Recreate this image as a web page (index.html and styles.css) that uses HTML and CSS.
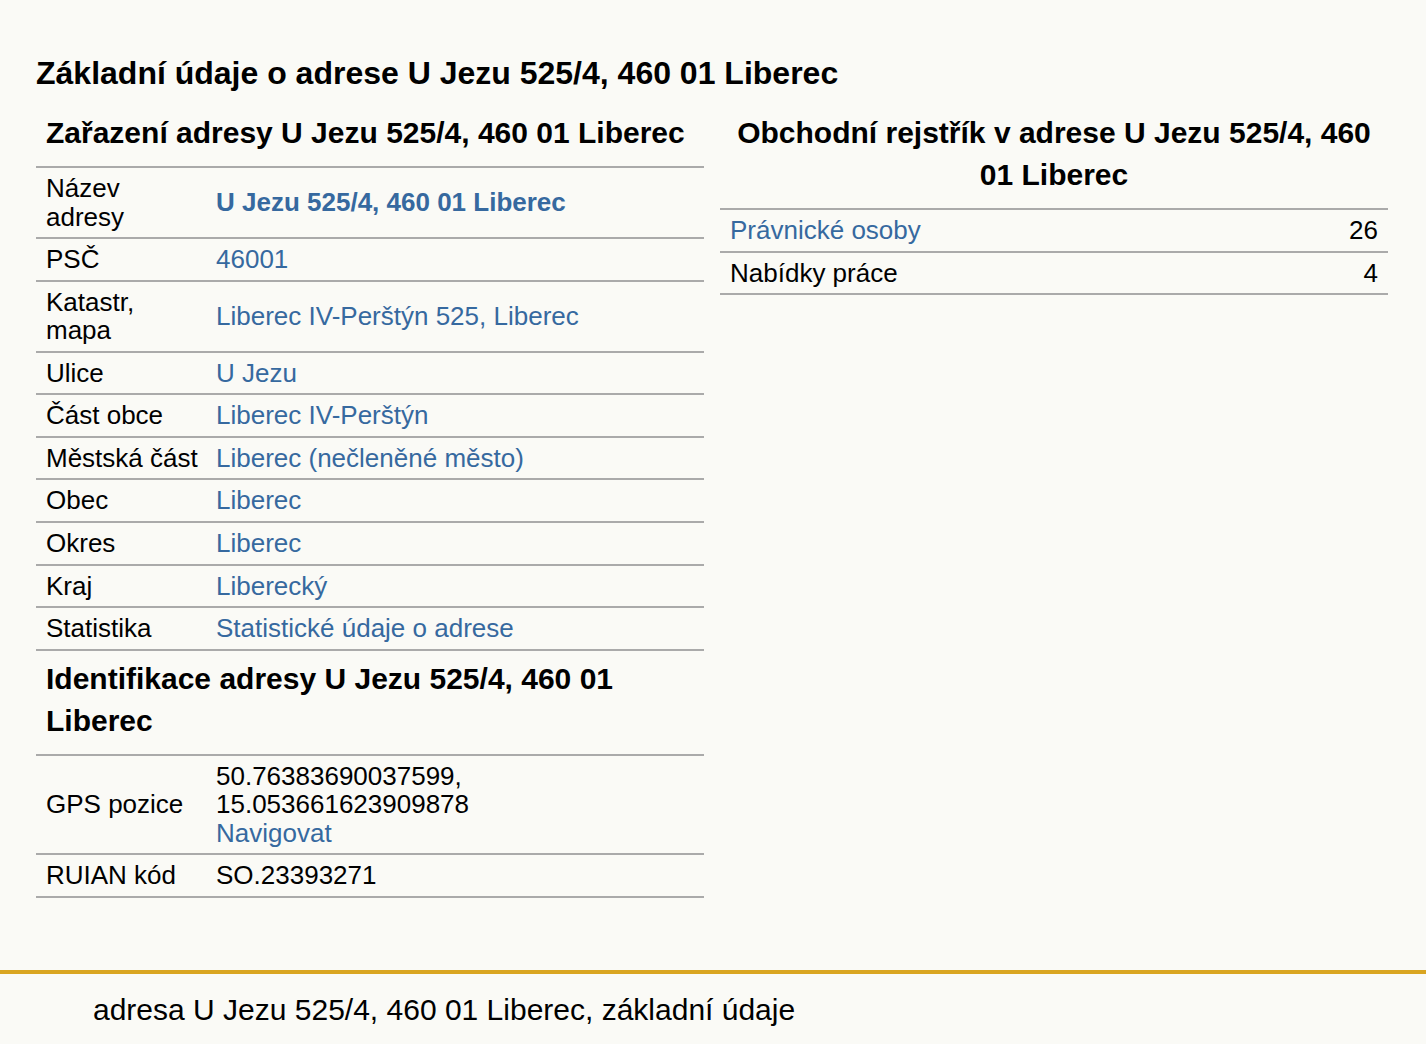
FILE: index.html
```html
<!DOCTYPE html>
<html lang="cs">
<head>
<meta charset="utf-8">
<title>adresa U Jezu 525/4, 460 01 Liberec, základní údaje</title>
<link rel="stylesheet" href="styles.css">
</head>
<body>
<main class="page">
  <h1 class="page-title">Základní údaje o adrese U Jezu 525/4, 460 01 Liberec</h1>
  <div class="columns">
    <section class="col">
      <h2 class="sec-title">Zařazení adresy U Jezu 525/4, 460 01 Liberec</h2>
      <table class="info">
        <colgroup><col class="c-label"><col></colgroup>
        <tbody>
          <tr><td>Název adresy</td><td><a class="strong" href="#">U Jezu 525/4, 460 01 Liberec</a></td></tr>
          <tr><td>PSČ</td><td><a href="#">46001</a></td></tr>
          <tr><td>Katastr, mapa</td><td><a href="#">Liberec IV-Perštýn 525, Liberec</a></td></tr>
          <tr><td>Ulice</td><td><a href="#">U Jezu</a></td></tr>
          <tr><td>Část obce</td><td><a href="#">Liberec IV-Perštýn</a></td></tr>
          <tr><td class="nowrap">Městská část</td><td><a href="#">Liberec (nečleněné město)</a></td></tr>
          <tr><td>Obec</td><td><a href="#">Liberec</a></td></tr>
          <tr><td>Okres</td><td><a href="#">Liberec</a></td></tr>
          <tr><td>Kraj</td><td><a href="#">Liberecký</a></td></tr>
          <tr><td>Statistika</td><td><a href="#">Statistické údaje o adrese</a></td></tr>
          <tr><th colspan="2" class="sub-title">Identifikace adresy U Jezu 525/4, 460 01 Liberec</th></tr>
          <tr><td class="nowrap">GPS pozice</td><td>50.76383690037599,<br>15.053661623909878<br><a href="#">Navigovat</a></td></tr>
          <tr><td class="nowrap">RUIAN kód</td><td>SO.23393271</td></tr>
        </tbody>
      </table>
    </section>
    <section class="col">
      <h2 class="sec-title center">Obchodní rejstřík v adrese U Jezu 525/4, 460 01 Liberec</h2>
      <table class="info">
        <tbody>
          <tr><td><a href="#">Právnické osoby</a></td><td class="num">26</td></tr>
          <tr><td>Nabídky práce</td><td class="num">4</td></tr>
        </tbody>
      </table>
    </section>
  </div>
</main>
<footer class="footer">adresa U Jezu 525/4, 460 01 Liberec, základní údaje</footer>
</body>
</html>
```

FILE: styles.css
```css
html, body {
  margin: 0;
  padding: 0;
  background: #fafaf6;
  color: #000;
  font-family: "Liberation Sans", Arial, sans-serif;
}

.page {
  padding: 51px 38px 72px 36px;
}

.page-title {
  margin: 0 0 17px 0;
  font-size: 32px;
  line-height: 44px;
  font-weight: bold;
}

.columns {
  display: flex;
  gap: 16px;
  align-items: flex-start;
}

.col {
  flex: 1 1 0;
  min-width: 0;
}

.sec-title {
  margin: 0;
  padding: 0 10px 12px 10px;
  font-size: 30px;
  line-height: 42px;
  font-weight: bold;
}

.sec-title.center {
  text-align: center;
}

.info {
  width: 100%;
  border-collapse: collapse;
  table-layout: fixed;
  font-size: 26px;
  line-height: 28.4px;
  border-top: 2px solid #aaa;
}

.c-label {
  width: 170px;
}

.info td {
  padding: 6.1px 10px;
  border-bottom: 2px solid #aaa;
  vertical-align: middle;
  text-align: left;
}

.info td.nowrap {
  white-space: nowrap;
}

.info td.num {
  text-align: right;
}

.info a {
  color: #36699f;
  text-decoration: none;
}

.info a.strong {
  font-weight: bold;
}

.sub-title {
  padding: 7px 10px 12px 10px;
  font-size: 30px;
  line-height: 42px;
  font-weight: bold;
  text-align: left;
  border-bottom: 2px solid #aaa;
}

.footer {
  border-top: 4px solid #d9a521;
  padding: 19px 93px 20px 93px;
  font-size: 30px;
  line-height: 34px;
}
```
